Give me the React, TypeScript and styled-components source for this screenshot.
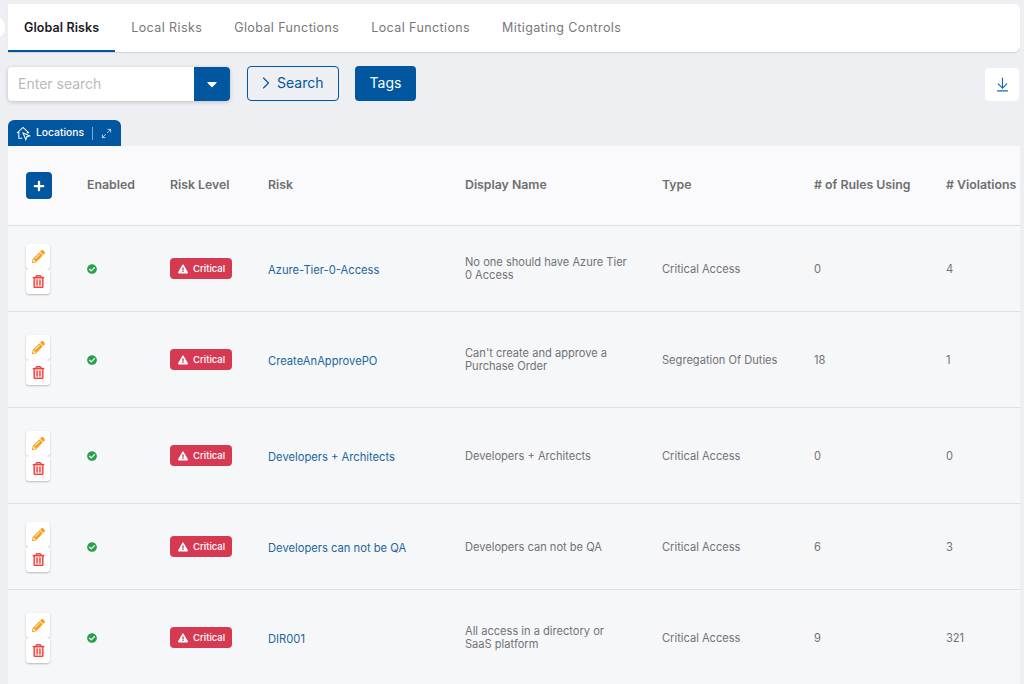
import React from 'react';
import styled, {createGlobalStyle} from 'styled-components';
import {FaCheckCircle, FaExclamationTriangle, FaPencilAlt, FaPlus, FaRegTrashAlt, FaCaretDown} from 'react-icons/fa';
import {ArrowDownToLine, ChevronRight, Maximize2} from 'lucide-react';

const GlobalStyle = createGlobalStyle`
    html, body {
        margin: 0;
        height: 684px;
        overflow: hidden;
        background: #eeeff3;
        font-family: Inter, 'Noto Sans', sans-serif;
    }
`;

const Page = styled.div`
    width: 1024px;
    height: 684px;
    overflow: hidden;
    position: relative;
    box-sizing: border-box;
    padding: 4px 4px 0 8px;
`;

const PageNub = styled.div`
    position: absolute;
    left: -8px;
    top: 18px;
    width: 13px;
    height: 19px;
    border-radius: 50%;
    background: #fff;
`;

const TabBar = styled.nav`
    display: flex;
    height: 48px;
    background: #fff;
    border-radius: 0 6px 6px 0;
    box-shadow: 0 1px 1px rgba(0, 0, 0, 0.12);
`;

const Tab = styled.div<{$active?: boolean}>`
    display: flex;
    align-items: center;
    padding: 0 16px;
    font-size: 12.5px;
    letter-spacing: ${({$active}) => $active ? '0.1px' : '0.4px'};
    font-weight: ${({$active}) => $active ? 600 : 400};
    color: ${({$active}) => $active ? '#1b1b1f' : '#77787c'};
    border-bottom: 2px solid ${({$active}) => $active ? '#00569f' : 'transparent'};
    box-sizing: border-box;
`;

const Toolbar = styled.div`
    display: flex;
    align-items: center;
    height: 35px;
    margin-top: 14px;
`;

const SearchBox = styled.div`
    display: flex;
    width: 222px;
    height: 34px;
    border-radius: 4px;
    overflow: hidden;
    background: #fff;
    box-shadow: 0 1px 4px rgba(0, 0, 0, 0.2);
`;

const SearchInput = styled.div`
    flex: 1;
    display: flex;
    align-items: center;
    padding-left: 10px;
    font-size: 14px;
    color: #b9b9bc;
`;

const SearchCaret = styled.div`
    width: 36px;
    display: flex;
    align-items: center;
    justify-content: center;
    background: #00569f;
    color: #fff;
`;

const OutlineButton = styled.div`
    display: flex;
    align-items: center;
    gap: 1px;
    box-sizing: border-box;
    width: 92px;
    height: 35px;
    margin-left: 17px;
    padding: 0 0 2px 8px;
    border: 1px solid #00569f;
    border-radius: 4px;
    font-size: 14px;
    color: #00569f;
`;

const SolidButton = styled.div`
    display: flex;
    align-items: center;
    justify-content: center;
    width: 61px;
    height: 35px;
    margin-left: 16px;
    padding-bottom: 2px;
    box-sizing: border-box;
    border-radius: 4px;
    background: #00569f;
    font-size: 14px;
    color: #fff;
`;

const DownloadButton = styled.div`
    display: flex;
    align-items: center;
    justify-content: center;
    align-self: flex-end;
    width: 34px;
    height: 33px;
    margin-left: auto;
    margin-right: 1px;
    border-radius: 4px;
    background: #fff;
    color: #1566ad;
`;

const LocationsTab = styled.div`
    display: flex;
    align-items: center;
    width: 113px;
    height: 26px;
    margin-top: 19px;
    padding-left: 8px;
    box-sizing: border-box;
    border-radius: 6px 6px 0 0;
    background: #00569f;
    font-size: 10.3px;
    font-weight: 500;
    color: #fff;
`;

const LocationsLabel = styled.span`
    margin-left: 5px;
    padding-bottom: 2px;
`;

const Divider = styled.span`
    width: 1px;
    height: 13px;
    margin: 0 8px;
    background: rgba(255, 255, 255, 0.5);
`;

const Table = styled.div`
    width: 1012px;
    background: #f6f7f9;
`;

const Row = styled.div<{$height: number; $header?: boolean}>`
    display: grid;
    grid-template-columns: 79px 83px 98px 197px 197px 152px 132px 74px;
    align-items: center;
    height: ${({$height}) => $height}px;
    box-sizing: border-box;
    background: ${({$header}) => $header ? '#fafafc' : 'transparent'};
    border-bottom: 1px solid #dedfe3;
`;

const HeaderCell = styled.div`
    padding-bottom: 2px;
    font-size: 12.3px;
    font-weight: 600;
    color: #6d6e72;
    white-space: nowrap;
`;

const Cell = styled.div`
    padding: 2px 32px 0 0;
    font-size: 11.1px;
    line-height: 13px;
    color: #717276;
`;

const DisplayCell = styled(Cell)`
    padding-top: 1px;
`;

const ActionCell = styled.div<{$header?: boolean}>`
    padding: ${({$header}) => $header ? '0' : '1px'} 0 0 18px;
`;

const AddButton = styled.div`
    display: flex;
    align-items: center;
    justify-content: center;
    width: 26px;
    height: 27px;
    border-radius: 4px;
    background: #00569f;
    color: #fff;
`;

const ActionButton = styled.div<{$color: string}>`
    display: flex;
    align-items: center;
    justify-content: center;
    width: 24px;
    height: 25px;
    background: #fff;
    border-radius: 3px;
    box-shadow: 0 1px 2px rgba(0, 0, 0, 0.25);
    color: ${({$color}) => $color};
`;

const Enabled = styled.div`
    display: flex;
    color: #28a14a;
`;

const Badge = styled.div`
    display: inline-flex;
    align-items: center;
    gap: 5px;
    width: 62px;
    height: 21px;
    box-sizing: border-box;
    padding-left: 8px;
    border-radius: 4px;
    background: #d63a52;
    color: #fff;
    font-size: 9.5px;
    font-weight: 500;
`;

const RiskLink = styled.div`
    padding-top: 2px;
    font-size: 11.2px;
    color: #1b659f;
`;

type Risk = {
    height: number;
    risk: string;
    display: string;
    type: string;
    rules: string;
    violations: string;
};

const risks: Risk[] = [
	{height: 86, risk: 'Azure-Tier-0-Access', display: 'No one should have Azure Tier 0 Access', type: 'Critical Access', rules: '0', violations: '4'},
	{height: 96, risk: 'CreateAnApprovePO', display: 'Can\'t create and approve a Purchase Order', type: 'Segregation Of Duties', rules: '18', violations: '1'},
	{height: 96, risk: 'Developers + Architects', display: 'Developers + Architects', type: 'Critical Access', rules: '0', violations: '0'},
	{height: 86, risk: 'Developers can not be QA', display: 'Developers can not be QA', type: 'Critical Access', rules: '6', violations: '3'},
	{height: 96, risk: 'DIR001', display: 'All access in a directory or SaaS platform', type: 'Critical Access', rules: '9', violations: '321'},
];

const tabs = ['Local Risks', 'Global Functions', 'Local Functions', 'Mitigating Controls'];
const headers = ['Enabled', 'Risk Level', 'Risk', 'Display Name', 'Type', '# of Rules Using', '# Violations'];

function LocationIcon() {
	return (
		<svg width="15" height="15" viewBox="0 0 16 16" fill="none" stroke="#fff" strokeWidth="1.1">
			<path d="M1 7.5 7.5 1.5 14 7.5M3 6.5V13H6.5M12 6.5V8" />
			<path d="M7.5 7.5 14.5 10.5 11.5 11.5 10.5 14.5Z" />
		</svg>
	);
}

export default function App() {
	return (
		<Page>
			<GlobalStyle />
			<PageNub />
			<TabBar>
				<Tab $active>Global Risks</Tab>
				{tabs.map(tab => <Tab key={tab}>{tab}</Tab>)}
			</TabBar>
			<Toolbar>
				<SearchBox>
					<SearchInput>Enter search</SearchInput>
					<SearchCaret><FaCaretDown size={16} /></SearchCaret>
				</SearchBox>
				<OutlineButton><ChevronRight size={20} strokeWidth={1.4} />Search</OutlineButton>
				<SolidButton>Tags</SolidButton>
				<DownloadButton><ArrowDownToLine size={17} strokeWidth={1.6} /></DownloadButton>
			</Toolbar>
			<LocationsTab>
				<LocationIcon />
				<LocationsLabel>Locations</LocationsLabel>
				<Divider />
				<Maximize2 size={11} strokeWidth={1.5} />
			</LocationsTab>
			<Table>
				<Row $height={80} $header>
					<ActionCell $header><AddButton><FaPlus size={12} /></AddButton></ActionCell>
					{headers.map(header => <HeaderCell key={header}>{header}</HeaderCell>)}
				</Row>
				{risks.map(risk => (
					<Row key={risk.risk} $height={risk.height}>
						<ActionCell>
							<ActionButton $color="#f9a01b"><FaPencilAlt size={13} /></ActionButton>
							<ActionButton $color="#f4433c"><FaRegTrashAlt size={13} stroke="currentColor" strokeWidth={14} /></ActionButton>
						</ActionCell>
						<Enabled><FaCheckCircle size={10} /></Enabled>
						<div><Badge><FaExclamationTriangle size={10} />Critical</Badge></div>
						<RiskLink>{risk.risk}</RiskLink>
						<DisplayCell>{risk.display}</DisplayCell>
						<Cell>{risk.type}</Cell>
						<Cell>{risk.rules}</Cell>
						<Cell>{risk.violations}</Cell>
					</Row>
				))}
			</Table>
		</Page>
	);
}
